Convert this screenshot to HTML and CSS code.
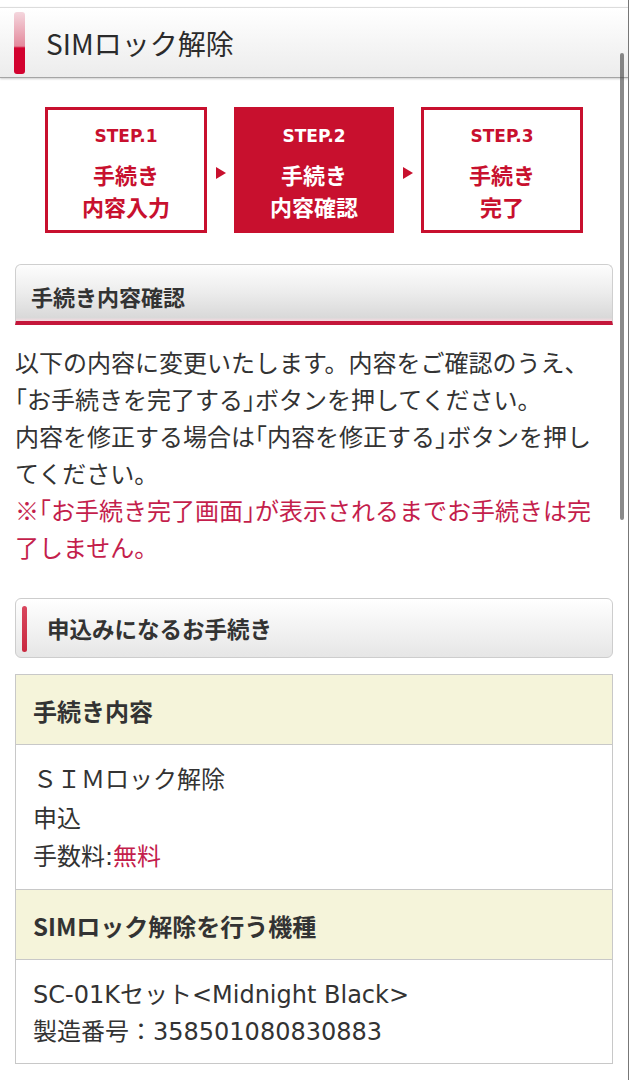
FILE: index.html
```html
<!DOCTYPE html>
<html lang="ja">
<head>
<meta charset="utf-8">
<title>SIMロック解除</title>
<link rel="stylesheet" href="styles.css">
</head>
<body>
<header class="page-head">
  <span class="head-bar"></span>
  <h1 class="head-title">SIMロック解除</h1>
</header>

<main class="main">
  <div class="steps">
    <div class="step">
      <div class="step-label">STEP.1</div>
      <div class="step-title">
        <div>手続き</div>
        <div>内容入力</div>
      </div>
    </div>
    <div class="step-arrow"><span class="tri"></span></div>
    <div class="step step-current">
      <div class="step-label">STEP.2</div>
      <div class="step-title">
        <div>手続き</div>
        <div>内容確認</div>
      </div>
    </div>
    <div class="step-arrow"><span class="tri"></span></div>
    <div class="step">
      <div class="step-label">STEP.3</div>
      <div class="step-title">
        <div>手続き</div>
        <div>完了</div>
      </div>
    </div>
  </div>

  <h2 class="sec-head">手続き内容確認</h2>

  <div class="lead">
    <p class="lead-line">以下の内容に変更いたします。内容をご確認のうえ、</p>
    <p class="lead-line"><span class="k">「</span>お手続きを完了する<span class="k">」</span>ボタンを押してください。</p>
    <p class="lead-line">内容を修正する場合は<span class="k">「</span>内容を修正する<span class="k">」</span>ボタンを押し</p>
    <p class="lead-line">てください。</p>
    <p class="lead-line note">※<span class="k">「</span>お手続き完了画面<span class="k">」</span>が表示されるまでお手続きは完</p>
    <p class="lead-line note">了しません。</p>
  </div>

  <h3 class="sub-head"><span class="sub-bar"></span>申込みになるお手続き</h3>

  <div class="tbl">
    <div class="th">手続き内容</div>
    <div class="td">
      <div>ＳＩＭロック解除</div>
      <div>申込</div>
      <div>手数料:<span class="red">無料</span></div>
    </div>
    <div class="th">SIMロック解除を行う機種</div>
    <div class="td td-last">
      <div>SC-01Kセット&lt;Midnight Black&gt;</div>
      <div>製造番号：358501080830883</div>
    </div>
  </div>
</main>

<div class="scrollbar"></div>
<div class="edge"></div>
</body>
</html>
```

FILE: styles.css
```css
html, body {
  margin: 0;
  padding: 0;
  background: #fff;
}

body {
  font-family: "Noto Sans CJK JP", "Noto Sans", sans-serif;
  color: #333;
  width: 629px;
  min-height: 1080px;
  overflow: hidden;
}

.page-head {
  margin-top: 7px;
  height: 69px;
  border-top: 1px solid #dcdcdc;
  border-bottom: 1px solid #a5a5a5;
  box-shadow: 0 1px 2px rgba(0, 0, 0, 0.2);
  background: linear-gradient(#ffffff, #ececec);
  display: flex;
  align-items: center;
  padding-left: 14px;
}

.head-bar {
  width: 11px;
  height: 62px;
  border-radius: 3px;
  background: linear-gradient(#f4d6dd 0%, #e48a9d 55%, #d2022f 58%, #d2022f 100%);
  flex: none;
}

.head-title {
  margin: 0 0 0 21px;
  font-size: 28px;
  font-weight: normal;
  line-height: 32px;
  color: #2b2b2b;
}

.main {
  padding: 0 16px 0 15px;
}

.steps {
  margin-top: 29px;
  display: flex;
  justify-content: center;
}

.step {
  width: 162px;
  height: 126px;
  box-sizing: border-box;
  border: 3px solid #c8102e;
  color: #c8102e;
  text-align: center;
  padding-top: 15px;
  font-weight: bold;
}

.step-current {
  width: 160px;
  background: #c8102e;
  color: #fff;
}

.step-label {
  font-family: "DejaVu Sans", "Noto Sans CJK JP", sans-serif;
  font-size: 17px;
  line-height: 22px;
}

.step-title {
  margin-top: 11px;
  font-size: 22px;
  line-height: 32px;
}

.step-arrow {
  width: 27px;
  display: flex;
  justify-content: center;
  padding-top: 60px;
  box-sizing: border-box;
}

.tri {
  width: 0;
  height: 0;
  border-left: 10px solid #c8102e;
  border-top: 6px solid transparent;
  border-bottom: 6px solid transparent;
}

.sec-head {
  margin: 31px 0 0;
  padding: 18px 15px 12px;
  font-size: 22px;
  font-weight: bold;
  line-height: 26px;
  color: #333;
  border: 1px solid #cfcfcf;
  border-bottom: 4px solid #c4163a;
  border-radius: 6px 6px 0 0;
  background: linear-gradient(#fdfdfd 0%, #ececec 50%, #d9d9d9 94%, #f7dbe1 100%);
}

.lead {
  margin-top: 18px;
  font-size: 24px;
  line-height: 37px;
  color: #333;
}

.lead-line {
  margin: 0;
  white-space: nowrap;
}

.k {
  font-feature-settings: "halt";
}

.note {
  color: #c41e4c;
}

.red {
  color: #c41e4c;
}

.sub-head {
  margin: 33px 0 0;
  position: relative;
  padding: 16px 15px 16px 31px;
  font-size: 22.5px;
  font-weight: bold;
  line-height: 26px;
  color: #333;
  border: 1px solid #cdcdcd;
  border-radius: 6px;
  background: linear-gradient(#ffffff, #e6e6e6);
  display: flex;
  align-items: center;
}

.sub-bar {
  position: absolute;
  left: 6px;
  top: 7px;
  bottom: 5px;
  width: 5px;
  border-radius: 3px;
  background: linear-gradient(#d9475e, #c9283f);
}

.tbl {
  margin-top: 16px;
  border: 1px solid #c8c8c8;
}

.th {
  background: #f5f4da;
  padding: 21px 17px 18px;
  font-size: 24px;
  font-weight: bold;
  line-height: 30px;
  color: #333;
  border-bottom: 1px solid #c8c8c8;
}

.td {
  font-family: "DejaVu Sans", "Noto Sans CJK JP", sans-serif;
  padding: 16px 17px 12px;
  font-size: 24px;
  line-height: 38.5px;
  color: #333;
  border-bottom: 1px solid #c8c8c8;
}

.td-last {
  border-bottom: none;
  line-height: 37px;
  padding-top: 17px;
}

.scrollbar {
  position: fixed;
  right: 5px;
  top: 53px;
  width: 4px;
  height: 467px;
  border-radius: 2px;
  background: rgba(60, 60, 60, 0.6);
}

.edge {
  position: fixed;
  right: 0;
  top: 0;
  width: 1px;
  height: 1080px;
  background: #777;
}
```
